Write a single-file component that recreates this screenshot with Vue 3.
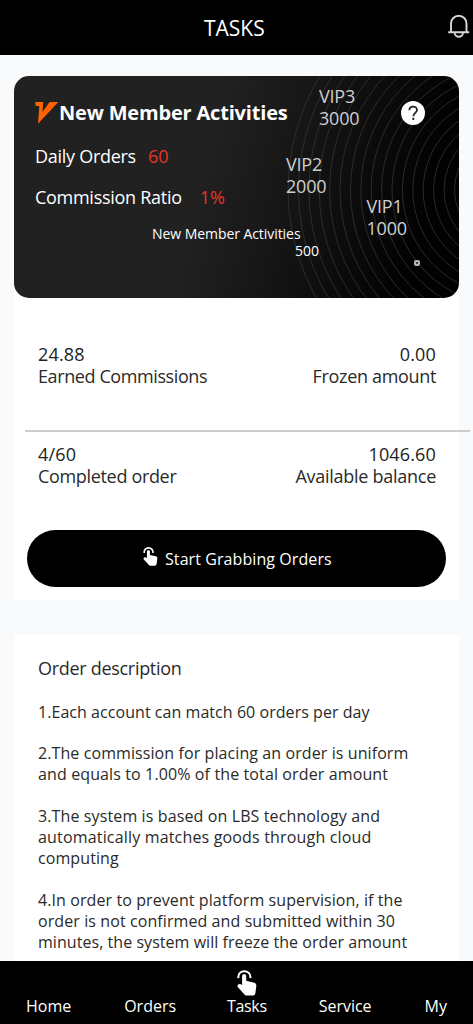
<script setup>
const stats = [
  [
    { value: '24.88', label: 'Earned Commissions', cls: 'earned' },
    { value: '0.00', label: 'Frozen amount', cls: 'frozen' },
  ],
  [
    { value: '4/60', label: 'Completed order', cls: 'completed' },
    { value: '1046.60', label: 'Available balance', cls: 'balance' },
  ],
]
const rules = [
  ['1.Each account can match 60 orders per day'],
  ['2.The commission for placing an order is uniform', 'and equals to 1.00% of the total order amount'],
  ['3.The system is based on LBS technology and', 'automatically matches goods through cloud', 'computing'],
  ['4.In order to prevent platform supervision, if the', 'order is not confirmed and submitted within 30', 'minutes, the system will freeze the order amount'],
]
const rings = Array.from({ length: 17 }, (_, i) => 220 - i * 10.4)
const hand = 'M5.100 6.300c0-2.600 4.100-2.600 4.100 0V10.800l8 2c1.700.5 2.300 1.600 2.100 3.200L18.400 23c-.3 1.800-1.200 2.600-3 2.600H10.200c-1.200 0-2-.4-2.800-1.200L.3 16.400c.6-2 1.800-2.700 3.400-2.100l1.400.6z'
</script>

<template>
  <div class="page">
    <header class="bar">
      <span class="title">TASKS</span>
      <svg class="bell" width="24" height="26" viewBox="0 0 24 26" fill="none" stroke="#d8d8d8" stroke-width="1.900">
        <path d="M4 18V9.500a7.600 7.600 0 0 1 15.500 0V18M1.200 18.200h21M7.600 18.500a4.200 4.200 0 0 0 8.400 0" />
      </svg>
    </header>

    <section class="panel">
      <div class="card">
        <svg class="rings" width="445" height="222" viewBox="14 76 445 222" fill="none" stroke="#353535" stroke-width="0.8">
          <circle v-for="r in rings" :key="r" cx="508" cy="190" :r="r" />
        </svg>
        <div class="heading">
          <svg width="24" height="22" viewBox="0 0 24 22"><path d="M.3 0H8.300L7.500 10 14.500 0H23.300L3 21.800 4.300 4.300.3 3.500z" fill="#ff6200" /></svg>
          <b>New Member Activities</b>
        </div>
        <div class="row daily"><span>Daily Orders</span><em>60</em></div>
        <div class="row ratio"><span>Commission Ratio</span><em>1%</em></div>
        <div class="member"><span>New Member Activities</span></div>
        <div class="base"><span>500</span></div>
        <div class="vip vip3">VIP3<br />3000</div>
        <div class="vip vip2">VIP2<br />2000</div>
        <div class="vip vip1">VIP1<br />1000</div>
        <div class="help">
          <svg width="24" height="24" viewBox="0 0 24 24" fill="none" stroke="#222" stroke-width="1.8"><path d="M8.300 9.300c0-4.900 7.700-4.900 7.700-.4 0 2.700-3.700 3.200-3.700 6.300M12.300 16.800v2.200" /></svg>
        </div>
        <i class="dot"></i>
      </div>

      <div v-for="(r, i) in stats" :key="i" class="stats">
        <div v-for="s in r" :key="s.label" class="stat" :class="s.cls">
          <div class="value">{{ s.value }}</div>
          <div class="label">{{ s.label }}</div>
        </div>
      </div>

      <button class="grab">
        <svg width="15" height="19" viewBox="0 0 20 26"><path d="M1.400 8.200C.2-1.200 14.400-1.200 13.400 8.200" fill="none" stroke="#fff" stroke-width="2.200" /><path :d="hand" fill="#fff" /></svg>
        <span>Start Grabbing Orders</span>
      </button>
    </section>

    <section class="desc">
      <h2>Order description</h2>
      <p v-for="(p, i) in rules" :key="i">
        <span v-for="(l, j) in p" :key="j" :class="'l' + i + j">{{ l }}</span>
      </p>
    </section>

    <nav class="tabs">
      <a class="t1">Home</a>
      <a class="t2">Orders</a>
      <a class="t3">
        <svg width="20" height="26" viewBox="0 0 20 26"><path d="M1.400 8.200C.2-1.200 14.400-1.200 13.400 8.200" fill="none" stroke="#fff" stroke-width="2" /><path :d="hand" fill="#fff" /></svg>
        <span>Tasks</span>
      </a>
      <a class="t4">Service</a>
      <a class="t5">My</a>
    </nav>
  </div>
</template>

<style>
body { background: #f9fafc; }
</style>

<style scoped>
.page { width: 473px; height: 1024px; overflow: hidden; position: relative; background: #f9fafc; font-family: "Open Sans", "Noto Sans", sans-serif; color: #2a2a2a; white-space: nowrap; }
.bar { height: 55px; background: #000; display: flex; align-items: center; position: relative; }
.title { margin-left: 204px; color: #fff; font-size: 21px; }
.bell { position: absolute; left: 447px; top: 14px; }
.panel { margin: 21px 14px 0; height: 524px; background: linear-gradient(#f9fafc 0 200px, #fff 200px); }
.card { position: relative; z-index: 0; height: 222px; border-radius: 15px; overflow: hidden; background: linear-gradient(105deg, #212121 0 42%, #161616 60%, #020202 88%); color: #fff; }
.rings { position: absolute; left: 0; top: 0; z-index: -1; }
.heading { display: flex; padding: 26px 0 0 21px; height: 22px; font-size: 20px; line-height: 22px; letter-spacing: -0.180px; }
.row { display: flex; padding-left: 21px; font-size: 18px; line-height: 22px; letter-spacing: -0.280px; }
.daily { margin-top: 21px; }
.ratio { margin-top: 19px; }
.row em { font-style: normal; color: #e63626; letter-spacing: 0; }
.daily em { margin-left: 12px; }
.ratio em { margin-left: 18px; }
.member { padding-left: 138px; margin-top: 17px; font-size: 14px; line-height: 18px; height: 17px; letter-spacing: -0.060px; }
.base { padding-left: 281px; font-size: 14px; line-height: 17px; }
.vip { position: absolute; font-size: 18px; line-height: 22px; color: #cfcfcf; letter-spacing: -0.200px; }
.vip3 { left: 305px; top: 9px; }
.vip2 { left: 272px; top: 77px; }
.vip1 { left: 352.500px; top: 119px; }
.help { position: absolute; left: 386.500px; top: 24.500px; width: 24px; height: 24px; border-radius: 50%; background: #fff; }
.dot { position: absolute; left: 400px; top: 184px; width: 2px; height: 2px; border: 2px solid #b5b5b5; border-radius: 2px; background: #444; }
.stats { display: flex; justify-content: space-between; padding: 45px 23px 0 24px; height: 87px; line-height: 22px; font-size: 18px; position: relative; }
.stats + .stats { padding-top: 13px; height: 87px; }
.stats + .stats::before { content: ""; position: absolute; left: 11px; top: 0; width: 445px; height: 2px; background: #ccc; }
.stat:nth-child(2) { text-align: right; }
.value { color: #222; letter-spacing: 0.150px; }
.label { letter-spacing: -0.400px; }
.completed .label, .frozen .label { letter-spacing: -0.330px; }
.balance .label { letter-spacing: -0.270px; }
.grab { display: flex; align-items: center; margin: 0 13px; width: 419px; height: 57px; border: 0; border-radius: 29px; background: #000; color: #fff; font: 16px "Open Sans", sans-serif; letter-spacing: 0.080px; padding: 0 0 0 116px; }
.grab svg { margin: 0 7px 5px 0; }
.desc { margin: 35px 14px 0; background: #fff; padding: 21px 24px 0; height: 305px; }
h2 { margin: 0 0 21.500px; font-size: 18px; line-height: 24px; font-weight: 400; letter-spacing: -0.300px; }
p { margin: 0 0 20.750px; font-size: 16px; line-height: 21px; letter-spacing: 0.090px; }
p span { display: block; }
.l00, .l32 { letter-spacing: 0.050px; }
.l11, .l20 { letter-spacing: 0.120px; }
.l21 { letter-spacing: 0.170px; }
.tabs { position: absolute; left: 0; bottom: 0; width: 473px; height: 63px; background: #000; color: #fff; display: flex; align-items: flex-end; font-size: 16px; line-height: 22px; box-sizing: border-box; padding: 0 26px 7px 26px; justify-content: space-between; }
.t3 { display: flex; flex-direction: column; align-items: center; letter-spacing: -0.350px; margin-left: -2px; }
.t3 svg { margin-bottom: -1px; }
.t4 { margin-left: -1px; }
</style>
